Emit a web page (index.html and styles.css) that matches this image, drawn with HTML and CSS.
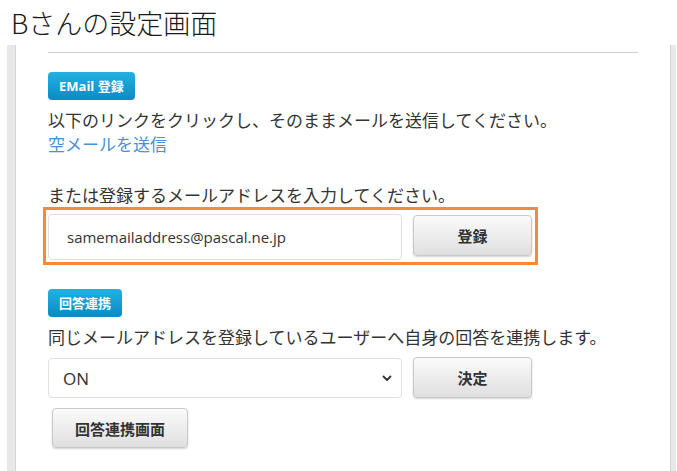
FILE: index.html
```html
<!DOCTYPE html>
<html lang="ja">
<head>
<meta charset="utf-8">
<title>Bさんの設定画面</title>
<link rel="stylesheet" href="styles.css">
</head>
<body>
<h1 class="page-title">Bさんの設定画面</h1>
<div class="panel">
  <div class="panel-inner">
    <hr class="divider">
    <section class="section">
      <span class="badge">EMail 登録</span>
      <p class="desc">以下のリンクをクリックし、そのままメールを送信してください。</p>
      <a class="link" href="#">空メールを送信</a>
      <p class="desc desc-spaced">または登録するメールアドレスを入力してください。</p>
      <div class="highlight">
        <input class="field" type="text" value="samemailaddress@pascal.ne.jp">
        <button class="btn btn-row" type="button">登録</button>
      </div>
    </section>
    <section class="section section-2">
      <span class="badge">回答連携</span>
      <p class="desc">同じメールアドレスを登録しているユーザーへ自身の回答を連携します。</p>
      <div class="select-row">
        <div class="select">
          <span class="select-value">ON</span>
          <svg class="chevron" width="10" height="7" viewBox="0 0 10 7"><polyline points="1.5,1.5 5,5 8.5,1.5" fill="none" stroke="#333" stroke-width="1.8" stroke-linecap="round" stroke-linejoin="round"/></svg>
        </div>
        <button class="btn" type="button">決定</button>
      </div>
      <button class="btn btn-wide" type="button">回答連携画面</button>
    </section>
  </div>
</div>
</body>
</html>
```

FILE: styles.css
```css
html, body {
  margin: 0;
  padding: 0;
  background: #fff;
}
body {
  display: flex;
  flex-direction: column;
  min-height: 100vh;
  font-family: "Noto Sans CJK JP", "Open Sans", sans-serif;
  color: #333;
}
.page-title {
  margin: 0;
  padding-left: 11px;
  height: 45px;
  font-size: 27px;
  line-height: 45px;
  font-weight: 300;
  color: #1a1a1a;
}
.panel {
  flex: 1;
  margin: 0 1px 0 7px;
  border-left: 8px solid #e8e8e8;
  border-right: 5px solid #e8e8e8;
  display: flex;
}
.panel-inner {
  flex: 1;
  border-left: 1px solid #d6d6d6;
  border-right: 1px solid #d6d6d6;
  padding: 7px 32px 0 32px;
}
.divider {
  margin: 0;
  border: 0;
  border-top: 1px solid #d0d0d0;
  height: 0;
}
.section {
  display: flex;
  flex-direction: column;
  align-items: flex-start;
}
.badge {
  margin-top: 19px;
  display: inline-block;
  height: 28px;
  line-height: 28px;
  padding: 0 11px;
  border-radius: 4px;
  background: linear-gradient(#22b1e2, #0a8bc2);
  color: #fff;
  font-size: 13px;
  font-weight: 700;
  font-family: "Open Sans", "Noto Sans CJK JP", sans-serif;
}
.desc {
  margin: 8px 0 0;
  font-size: 17px;
  line-height: 24px;
  color: #333;
}
.desc-spaced {
  margin-top: 27px;
}
.link {
  display: block;
  font-size: 17px;
  line-height: 24px;
  color: #4a90d6;
  text-decoration: none;
}
.highlight {
  display: flex;
  align-items: flex-start;
  gap: 11px;
  margin-left: -5px;
  padding: 4px 3px 2px 2px;
  border: 3px solid #f6893a;
}
.field {
  box-sizing: border-box;
  width: 354px;
  height: 46px;
  margin: 0;
  padding: 0 0 0 18px;
  border: 1px solid #e0e0e0;
  border-radius: 4px;
  background: #fff;
  font-family: "Open Sans", "Noto Sans CJK JP", sans-serif;
  font-size: 15px;
  color: #333;
  outline: none;
}
.btn {
  box-sizing: border-box;
  width: 119px;
  height: 41px;
  margin: 0;
  padding: 0;
  border: 1px solid #c9c9c9;
  border-radius: 4px;
  background: linear-gradient(#fbfbfb, #dfdfdf);
  box-shadow: 0 1px 2px rgba(0, 0, 0, 0.18);
  font-family: "Noto Sans CJK JP", sans-serif;
  font-size: 15px;
  font-weight: 700;
  color: #333;
}
.btn-row {
  margin-top: 1px;
}
.section-2 .badge {
  margin-top: 24px;
}
.select-row {
  display: flex;
  align-items: flex-start;
  gap: 11px;
  margin-top: 8px;
}
.select {
  box-sizing: border-box;
  width: 354px;
  height: 40px;
  margin-top: 1px;
  padding: 0 9px 0 14px;
  border: 1px solid #e2e2e2;
  border-radius: 4px;
  display: flex;
  align-items: center;
  justify-content: space-between;
  background: #fff;
}
.select-value {
  font-family: "Open Sans", "Noto Sans CJK JP", sans-serif;
  font-size: 17px;
  color: #333;
}
.chevron {
  display: block;
}
.btn-wide {
  width: 136px;
  height: 40px;
  margin: 10px 0 0 4px;
}
```
